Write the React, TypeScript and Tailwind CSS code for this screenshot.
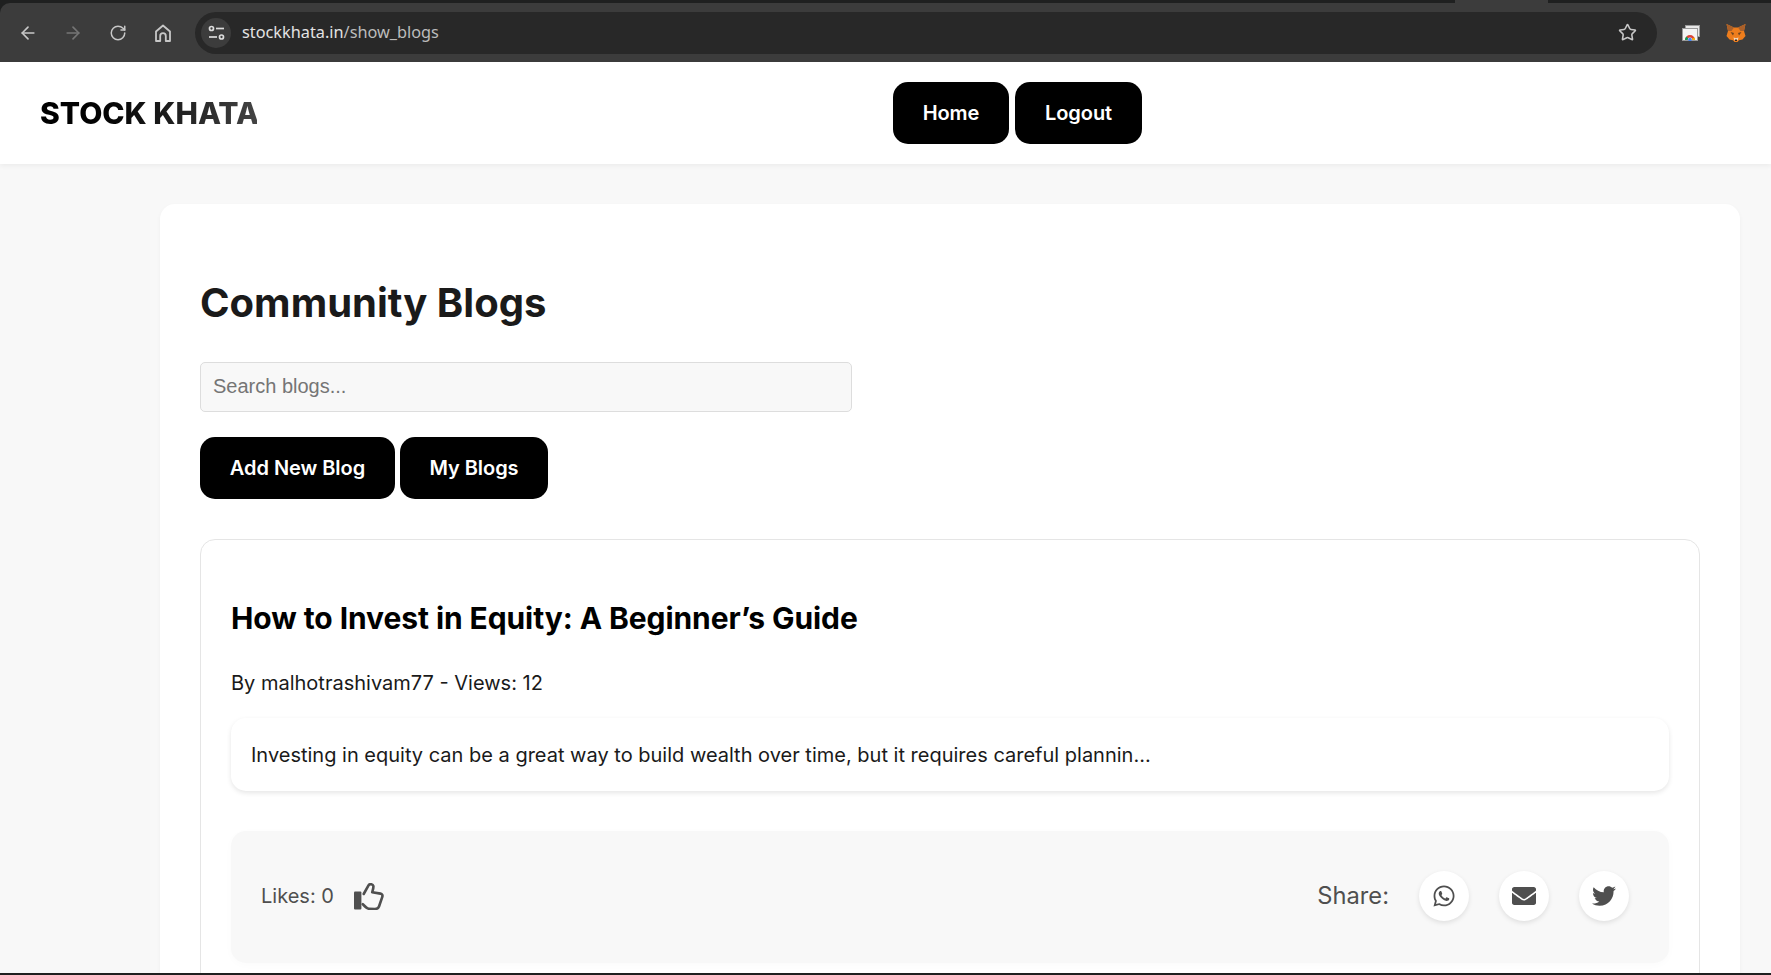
import React from 'react';
import { ArrowLeft, ArrowRight, RotateCw, Star } from 'lucide-react';
import { FaWhatsapp, FaEnvelope, FaTwitter } from 'react-icons/fa';

function TuneIcon() {
  return (
    <svg width="17" height="16" viewBox="0 0 17 16" fill="none" stroke="#dcdcdc" strokeWidth="1.7">
      <circle cx="3.500" cy="3.500" r="2" />
      <path d="M8 3.500h8" />
      <circle cx="13.500" cy="12" r="2" />
      <path d="M1 12h8" />
    </svg>
  );
}

function HomeIcon() {
  return (
    <svg width="16" height="18" viewBox="0 0 16 18" fill="none" stroke="#c7c7c7" strokeWidth="1.8" strokeLinejoin="round">
      <path d="M1 7.500 8 1.500l7 6V17h-4.200v-5a2.800 2.800 0 0 0-5.600 0v5H1z" />
    </svg>
  );
}

function ChromeExtIcon() {
  return (
    <svg width="18" height="16" viewBox="0 0 18 16">
      <rect x="3.500" y="0.500" width="14" height="11" fill="#e8e8e8" stroke="#9a9a9a" />
      <rect x="0.500" y="3.500" width="15" height="12" fill="#f4f4f4" stroke="#9a9a9a" />
      <path d="M3 15a5 5 0 0 1 10 0h-2.500a2.500 2.500 0 0 0-5 0z" fill="#db4437" />
      <path d="M3 15a5 5 0 0 1 1.500-3.500l1.800 2a2.500 2.500 0 0 0-.8 1.500z" fill="#0f9d58" />
      <path d="M10.500 15H13a5 5 0 0 0-.7-2.500l-2.300 1.200z" fill="#f4b400" />
      <circle cx="8" cy="14.500" r="1.800" fill="#4285f4" />
    </svg>
  );
}

function FoxIcon() {
  return (
    <svg width="20" height="18" viewBox="0 0 20 18">
      <path d="M0.500 0l7.500 3.500h4L19.500 0 18 7l1.500 5-3 3.500-3.500.8L11.500 18h-3L7 16.300l-3.500-.8-3-3.500L2 7z" fill="#ee7d1c" />
      <path d="M0.500 0 8 3.500 5.500 7 2 7zM19.500 0 12 3.500 14.500 7 18 7z" fill="#a9602a" />
      <path d="M4.500 8l3.500 1-1 2.500zM15.500 8 12 9l1 2.500z" fill="#6b4320" />
      <path d="M7.500 13.500l2.500.8 2.500-.8-.8 2.800H8.300z" fill="#f3d9bd" />
      <path d="M9 15.500h2v1.500H9z" fill="#33261c" />
    </svg>
  );
}

function ThumbIcon() {
  return (
    <svg width="31" height="27" viewBox="0 0 31 27" fill="none">
      <rect x="0" y="8.500" width="7.400" height="18" rx="1" fill="#4f4f4f" />
      <path
        d="M9.700 11 14.500 2.300C15.500 .6 18.800 .9 19.400 3 19.600 5 18.600 7.500 18.200 9.200L26.500 10.600C28.300 11 28.800 12.300 28.300 13.800L25 23.500C24.300 25.300 23 26 21 26L15 25.800C13 25.700 11.500 24 8.800 21.200"
        stroke="#4f4f4f"
        strokeWidth="2.600"
        strokeLinecap="round"
        strokeLinejoin="round"
      />
    </svg>
  );
}

function NavButton({ label, className }: { label: string; className: string }) {
  return (
    <button className={`h-[62px] rounded-[15px] bg-black text-white text-[20px] font-semibold tracking-[-0.05px] ${className}`}>
      {label}
    </button>
  );
}

function ShareButton({ icon }: { icon: React.ReactNode }) {
  return (
    <button className="w-[50px] h-[50px] rounded-full bg-white flex items-center justify-center text-[#4f4f4f] text-[24px] shadow-[0_2px_5px_rgba(0,0,0,0.1)]">
      {icon}
    </button>
  );
}

function BrowserBar() {
  return (
    <div className="h-[62px] shrink-0 bg-[#1f2020] flex flex-col">
      <div className="h-[3px] flex">
        <div className="w-[1455px]" />
        <div className="w-[93px] bg-[#3c3c3c]" />
      </div>
      <div className="flex-1 bg-[#3c3c3c] rounded-tl-[10px] flex items-center pl-[18px]">
        <ArrowLeft size={20} color="#c7c7c7" strokeWidth={2} />
        <ArrowRight size={20} color="#757575" strokeWidth={2} className="ml-[25px]" />
        <RotateCw size={18} color="#c7c7c7" strokeWidth={2} className="ml-[26px]" />
        <div className="ml-[28px]"><HomeIcon /></div>
        <div className="ml-[24px] w-[1462px] h-[42px] rounded-full bg-[#282828] flex items-center pl-[6px] pr-[20px]">
          <div className="w-[30px] h-[30px] rounded-full bg-[#3c3c3c] flex items-center justify-center">
            <TuneIcon />
          </div>
          <span className="ml-[11px] text-[16.3px] text-[#e3e3e3] font-['Noto_Sans',sans-serif]">
            stockkhata.in<span className="text-[#bcbcbc]">/show_blogs</span>
          </span>
          <Star size={19} color="#c7c7c7" strokeWidth={2} className="ml-auto" />
        </div>
        <div className="ml-[25px]"><ChromeExtIcon /></div>
        <div className="ml-[26px]"><FoxIcon /></div>
      </div>
    </div>
  );
}

export default function App() {
  return (
    <div className="h-[975px] overflow-hidden bg-[#f8f8f8] flex flex-col font-['Inter',sans-serif]">
      <BrowserBar />

      <nav className="h-[102px] shrink-0 bg-white flex items-center pl-10 shadow-[0_2px_5px_rgba(0,0,0,0.05)] relative">
        <div className="w-[217px] text-[30px] leading-none font-extrabold whitespace-nowrap bg-gradient-to-r from-black to-[#444444] bg-clip-text text-transparent">
          STOCK KHATA
        </div>
        <div className="ml-[636px] flex gap-[6px]">
          <NavButton label="Home" className="w-[116px]" />
          <NavButton label="Logout" className="w-[127px]" />
        </div>
      </nav>

      <main className="flex-1 min-h-0 overflow-hidden pt-10 pl-40 pr-[31px]">
        <div className="bg-white rounded-[15px] shadow-[0_2px_5px_rgba(0,0,0,0.04)] px-10 pt-[74px] pb-10">
          <h1 className="text-[40px] leading-[50px] font-bold text-[#1a1a1a]">Community Blogs</h1>

          <input
            placeholder="Search blogs..."
            className="block mt-[34px] w-[652px] h-[50px] px-3 pb-[2px] rounded-[5px] border border-[#dddddd] bg-[#f8f8f8] text-[20px] font-['Liberation_Sans',sans-serif] placeholder:text-[#757575] outline-none"
          />

          <div className="mt-[25px] flex gap-[5px]">
            <NavButton label="Add New Blog" className="w-[195px]" />
            <NavButton label="My Blogs" className="w-[148px]" />
          </div>

          <article className="mt-10 border border-[#e5e5e5] rounded-[15px] px-[30px] pt-[59px] pb-10">
            <h2 className="text-[30px] leading-[38px] font-bold tracking-[-0.08px] text-black">How to Invest in Equity: A Beginner’s Guide</h2>
            <p className="mt-[34px] text-[20px] leading-[24px] text-[#1a1a1a]">By malhotrashivam77 - Views: 12</p>
            <div className="mt-[23px] h-[73px] rounded-[15px] bg-white px-5 flex items-center text-[20px] text-[#1a1a1a] shadow-[0_2px_5px_rgba(0,0,0,0.1)]">
              Investing in equity can be a great way to build wealth over time, but it requires careful plannin...
            </div>
            <div className="mt-10 h-[132px] rounded-[15px] bg-[#f8f8f8] pl-[30px] pr-10 pb-[2px] flex items-center justify-between shadow-[0_2px_8px_rgba(0,0,0,0.02)]">
              <div className="flex items-center gap-5 text-[20px] text-[#4f4f4f]">
                <span>Likes: 0</span>
                <ThumbIcon />
              </div>
              <div className="flex items-center gap-[30px]">
                <span className="text-[23.7px] text-[#4f4f4f]">Share:</span>
                <ShareButton icon={<FaWhatsapp />} />
                <ShareButton icon={<FaEnvelope />} />
                <ShareButton icon={<FaTwitter />} />
              </div>
            </div>
          </article>
        </div>
      </main>
      <div className="h-[2px] shrink-0 bg-[#1f2020]" />
    </div>
  );
}
